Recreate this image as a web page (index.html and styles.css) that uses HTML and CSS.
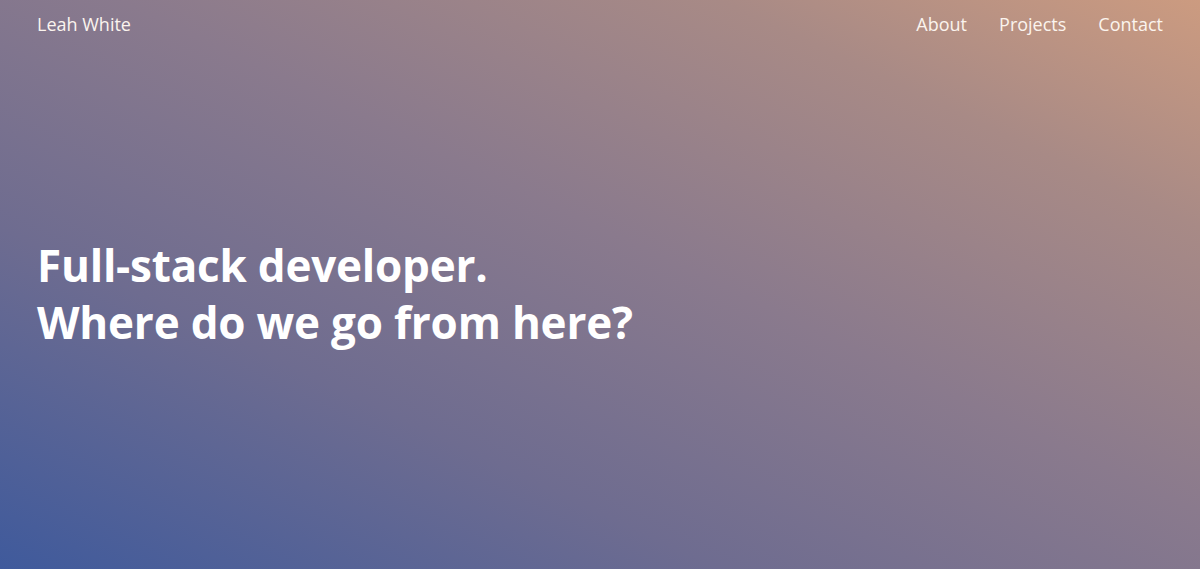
FILE: index.html
```html
<!DOCTYPE html>
<html lang="en">
<head>
<meta charset="utf-8">
<title>Leah White</title>
<link rel="stylesheet" href="styles.css">
</head>
<body>
<div class="page">
  <header class="topbar">
    <a class="brand" href="#">Leah White</a>
    <nav class="nav">
      <a href="#">About</a>
      <a href="#">Projects</a>
      <a href="#">Contact</a>
    </nav>
  </header>
  <main class="hero">
    <h1 class="headline">Full-stack developer.<br>Where do we go from here?</h1>
  </main>
</div>
</body>
</html>
```
FILE: styles.css
```css
html, body {
  margin: 0;
  padding: 0;
  height: 100%;
}
body {
  font-family: "Open Sans", "Noto Sans", sans-serif;
  color: #fbf4ee;
}
.page {
  min-height: 569px;
  height: 100vh;
  box-sizing: border-box;
  display: flex;
  flex-direction: column;
  background: linear-gradient(to top right, #3f5a9c 0%, #6e6c90 30%, #8a7a8d 55%, #a88a86 80%, #cc9b80 100%);
}
.topbar {
  display: flex;
  justify-content: space-between;
  align-items: center;
  padding: 10px 37px 0 37px;
  height: 28px;
}
.brand, .nav a {
  color: #fbf4ee;
  text-decoration: none;
  font-size: 18px;
}
.nav {
  display: flex;
  gap: 32px;
}
.hero {
  padding: 199px 37px 0 37px;
}
.headline {
  margin: 0;
  font-size: 44px;
  line-height: 57px;
  letter-spacing: -0.2px;
  font-weight: 700;
  color: #ffffff;
}
```
